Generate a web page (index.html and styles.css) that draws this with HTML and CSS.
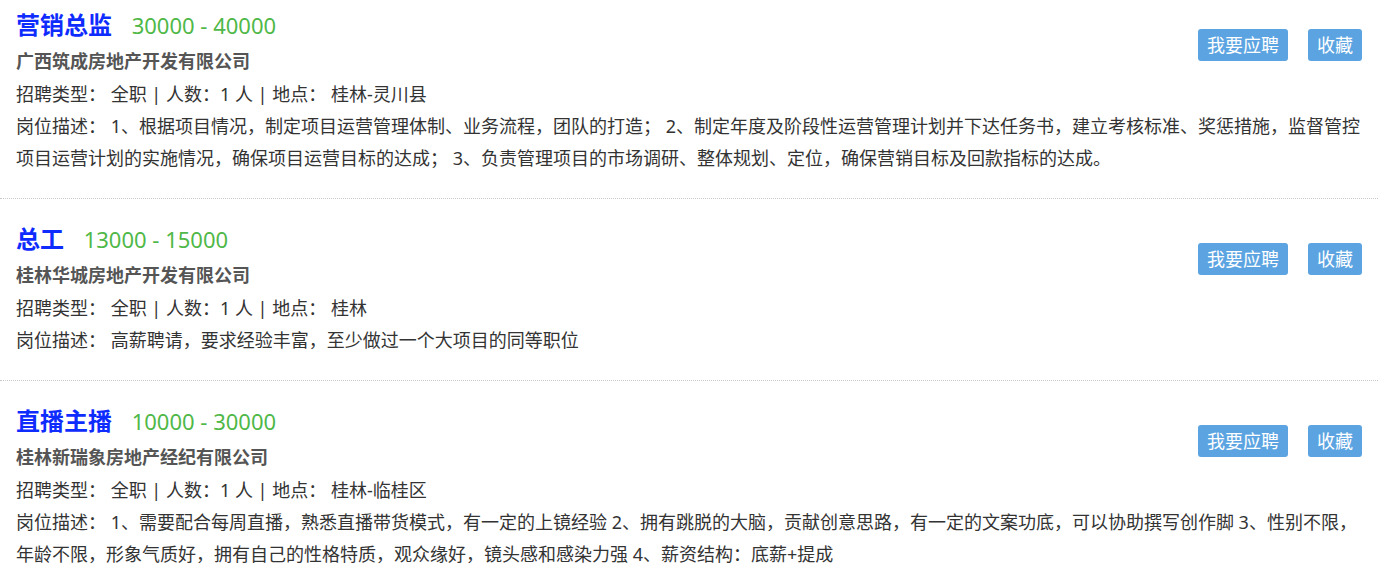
FILE: index.html
```html
<!DOCTYPE html>
<html lang="zh-CN">
<head>
    <meta charset="UTF-8">
    <meta name="viewport" content="width=device-width, initial-scale=1.0">
    <title>招聘信息</title>
    <link rel="stylesheet" href="styles.css">
</head>
<body>
    <div class="job-list">
        <div class="job">
            <div class="job-actions">
                <a class="btn" href="#">我要应聘</a>
                <a class="btn" href="#">收藏</a>
            </div>
            <div class="job-head">
                <span class="job-title">营销总监</span>
                <span class="job-salary">30000 - 40000</span>
            </div>
            <div class="job-company">广西筑成房地产开发有限公司</div>
            <div class="job-info">招聘类型： 全职 | 人数：1 人 | 地点： 桂林-灵川县</div>
            <div class="job-desc">岗位描述： 1、根据项目情况，制定项目运营管理体制、业务流程，团队的打造； 2、制定年度及阶段性运营管理计划并下达任务书，建立考核标准、奖惩措施，监督管控项目运营计划的实施情况，确保项目运营目标的达成； 3、负责管理项目的市场调研、整体规划、定位，确保营销目标及回款指标的达成。</div>
        </div>

        <div class="job">
            <div class="job-actions">
                <a class="btn" href="#">我要应聘</a>
                <a class="btn" href="#">收藏</a>
            </div>
            <div class="job-head">
                <span class="job-title">总工</span>
                <span class="job-salary">13000 - 15000</span>
            </div>
            <div class="job-company">桂林华城房地产开发有限公司</div>
            <div class="job-info">招聘类型： 全职 | 人数：1 人 | 地点： 桂林</div>
            <div class="job-desc">岗位描述： 高薪聘请，要求经验丰富，至少做过一个大项目的同等职位</div>
        </div>

        <div class="job">
            <div class="job-actions">
                <a class="btn" href="#">我要应聘</a>
                <a class="btn" href="#">收藏</a>
            </div>
            <div class="job-head">
                <span class="job-title">直播主播</span>
                <span class="job-salary">10000 - 30000</span>
            </div>
            <div class="job-company">桂林新瑞象房地产经纪有限公司</div>
            <div class="job-info">招聘类型： 全职 | 人数：1 人 | 地点： 桂林-临桂区</div>
            <div class="job-desc">岗位描述： 1、需要配合每周直播，熟悉直播带货模式，有一定的上镜经验 2、拥有跳脱的大脑，贡献创意思路，有一定的文案功底，可以协助撰写创作脚 3、性别不限，年龄不限，形象气质好，拥有自己的性格特质，观众缘好，镜头感和感染力强 4、薪资结构：底薪+提成</div>
        </div>
    </div>
</body>
</html>
```

FILE: styles.css
```css
body {
    margin: 0;
    font-family: "Noto Sans", "Noto Sans CJK SC", sans-serif;
    font-size: 18px;
    color: #333;
    background: #fff;
}
.job-list { width: 1378px; }
.job {
    padding: 23px 16px 24px 16px;
    border-bottom: 1px dotted #c8c8c8;
}
.job:first-child { padding-top: 8px; }
.job-actions {
    float: right;
    display: flex;
    gap: 20px;
    margin-top: 21px;
}
.btn {
    display: block;
    height: 32px;
    line-height: 32px;
    padding: 0 9px;
    background: #5ba4e1;
    color: #fff;
    border-radius: 3px;
    text-decoration: none;
    font-size: 18px;
}
.job-head { line-height: 33px; }
.job-title {
    font-size: 24px;
    font-weight: bold;
    color: #0f2cff;
}
.job-salary {
    font-size: 22px;
    color: #4fb848;
    margin-left: 15px;
}
.job-company {
    line-height: 34px;
    font-weight: bold;
    color: #555;
}
.job-info { line-height: 32px; }
.job-desc { line-height: 32px; }
```
